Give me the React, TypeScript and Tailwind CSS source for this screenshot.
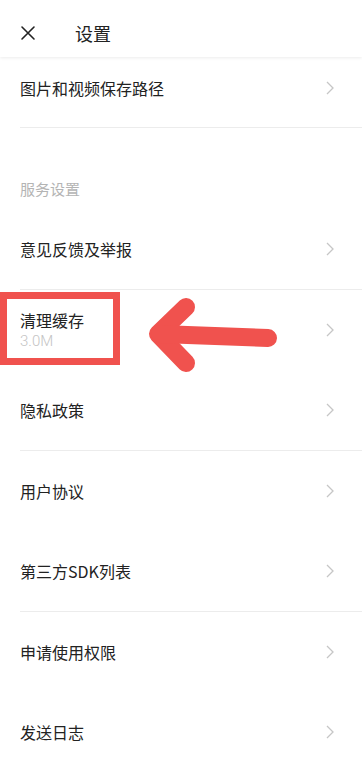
const font = { fontFamily: '"Noto Sans CJK SC", "Noto Sans", sans-serif' };

function Chevron() {
  return (
    <svg width="8" height="14" viewBox="0 0 8 14" className="mr-[28px] shrink-0">
      <path d="M1 1 L7 7 L1 13" fill="none" stroke="#c6c6c6" strokeWidth="1.3" />
    </svg>
  );
}

function Row({ title, sub }: { title: string; sub?: string }) {
  return (
    <div className="h-[80px] flex items-center justify-between pl-[20px]">
      <div className="flex flex-col">
        <span className="text-[16px] leading-[22px] text-[#222]">{title}</span>
        {sub && (
          <span className="text-[15px] leading-[20px] text-[#c4c4c4] font-light" style={{ fontFamily: 'Roboto, sans-serif' }}>
            {sub}
          </span>
        )}
      </div>
      <Chevron />
    </div>
  );
}

function Divider() {
  return <div className="h-px bg-[#ececec] ml-[20px]" />;
}

export default function App() {
  return (
    <div className="relative w-[362px] h-[768px] overflow-hidden bg-white" style={font}>
      {/* top bar */}
      <div className="relative z-10 h-[57px] flex items-center pt-[9px] bg-white shadow-[0_1px_3px_rgba(0,0,0,0.08)]">
        <svg width="16" height="16" viewBox="0 0 16 16" className="ml-[20px]">
          <path d="M2 2 L14 14 M14 2 L2 14" stroke="#222" strokeWidth="1.6" strokeLinecap="round" />
        </svg>
        <span className="ml-[39px] text-[18px] leading-[24px] text-[#222]">设置</span>
      </div>

      {/* first row, partly scrolled under the bar */}
      <div className="h-[70px] flex items-start justify-between pl-[20px] pt-[20px]">
        <span className="text-[16px] leading-[22px] text-[#222]">图片和视频保存路径</span>
        <div className="pt-[4px]">
          <Chevron />
        </div>
      </div>
      <Divider />

      <div className="h-[81px] pl-[20px] pt-[48px]">
        <span className="text-[15px] leading-[22px] text-[#b4b4b4]">服务设置</span>
      </div>

      <Row title="意见反馈及举报" />
      <Divider />
      <Row title="清理缓存" sub="3.0M" />
      <Row title="隐私政策" />
      <Divider />
      <Row title="用户协议" />
      <Row title="第三方SDK列表" />
      <Divider />
      <Row title="申请使用权限" />
      <Row title="发送日志" />

      {/* annotation */}
      <svg className="absolute inset-0 z-20 pointer-events-none" width="362" height="768">
        <rect x="3.5" y="295.5" width="113" height="66" fill="none" stroke="#f0524e" strokeWidth="7" />
        <polyline
          points="186,307 158,334 186,363"
          fill="none"
          stroke="#f0524e"
          strokeWidth="18"
          strokeLinecap="round"
          strokeLinejoin="round"
        />
        <line x1="160" y1="334" x2="268" y2="338" stroke="#f0524e" strokeWidth="18" strokeLinecap="round" />
      </svg>
    </div>
  );
}
